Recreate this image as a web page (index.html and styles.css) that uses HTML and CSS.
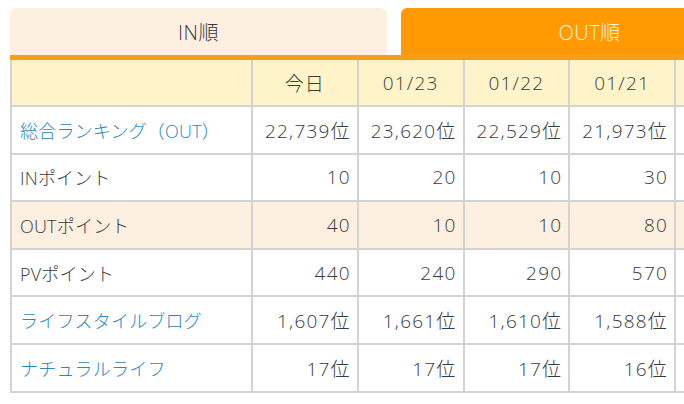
FILE: index.html
```html
<!DOCTYPE html>
<html lang="ja">
<head>
<meta charset="utf-8">
<link rel="stylesheet" href="styles.css">
</head>
<body>
<div class="wrap">
  <div class="tabs">
    <div class="tab tab-in">IN順</div>
    <div class="tab tab-out">OUT順</div>
  </div>
  <div class="bar"></div>
  <div class="grid">
    <div class="row head">
      <div class="c"></div>
      <div class="c ctr">今日</div>
      <div class="c ctr">01/23</div>
      <div class="c ctr">01/22</div>
      <div class="c ctr">01/21</div>
      <div class="c ctr"></div>
    </div>
    <div class="row">
      <div class="c lbl link">総合ランキング（OUT）</div>
      <div class="c num">22,739位</div>
      <div class="c num">23,620位</div>
      <div class="c num">22,529位</div>
      <div class="c num">21,973位</div>
      <div class="c num"></div>
    </div>
    <div class="row">
      <div class="c lbl">INポイント</div>
      <div class="c num">10</div>
      <div class="c num">20</div>
      <div class="c num">10</div>
      <div class="c num">30</div>
      <div class="c num"></div>
    </div>
    <div class="row peach">
      <div class="c lbl">OUTポイント</div>
      <div class="c num">40</div>
      <div class="c num">10</div>
      <div class="c num">10</div>
      <div class="c num">80</div>
      <div class="c num"></div>
    </div>
    <div class="row">
      <div class="c lbl">PVポイント</div>
      <div class="c num">440</div>
      <div class="c num">240</div>
      <div class="c num">290</div>
      <div class="c num">570</div>
      <div class="c num"></div>
    </div>
    <div class="row">
      <div class="c lbl link">ライフスタイルブログ</div>
      <div class="c num">1,607位</div>
      <div class="c num">1,661位</div>
      <div class="c num">1,610位</div>
      <div class="c num">1,588位</div>
      <div class="c num"></div>
    </div>
    <div class="row">
      <div class="c lbl link">ナチュラルライフ</div>
      <div class="c num">17位</div>
      <div class="c num">17位</div>
      <div class="c num">17位</div>
      <div class="c num">16位</div>
      <div class="c num"></div>
    </div>
  </div>
</div>
</body>
</html>
```
FILE: styles.css
```css
html, body {
  margin: 0;
  padding: 0;
  background: #ffffff;
  overflow: hidden;
}
body {
  font-family: "Open Sans", "Noto Sans CJK JP", sans-serif;
  font-weight: 300;
  font-size: 18px;
  color: #3a3a3a;
}
.wrap {
  margin: 8px 0 0 10px;
  width: 674px;
  overflow: hidden;
}
.tabs {
  display: flex;
  gap: 14px;
}
.tab {
  flex: 0 0 377px;
  height: 47px;
  border-radius: 6px 6px 0 0;
  display: flex;
  align-items: center;
  justify-content: center;
  font-size: 20px;
  letter-spacing: 0.5px;
}
.tab-in {
  background: #fdf0e1;
  color: #3a3a3a;
}
.tab-out {
  background: #ff9a05;
  color: #fff3dc;
}
.bar {
  height: 5px;
  background: #f59e1c;
}
.grid {
  display: grid;
  grid-template-columns: 239px repeat(5, 103.75px);
  grid-template-rows: 45px repeat(6, 45.6px);
  gap: 2px;
  background: #d3d3d3;
  border-left: 2px solid #d3d3d3;
  padding-bottom: 2px;
  width: max-content;
}
.row {
  display: contents;
}
.c {
  background: #ffffff;
  display: flex;
  align-items: center;
  padding: 0 8px;
  white-space: nowrap;
}
.lbl {
  letter-spacing: 0.2px;
}
.head .c {
  background: #fff3c9;
}
.peach .c {
  background: #fdf0e0;
}
.ctr {
  justify-content: center;
  font-size: 19px;
  letter-spacing: 1.2px;
}
.num {
  justify-content: flex-end;
  font-size: 19px;
  letter-spacing: 1.2px;
  padding-right: 6px;
}
.link {
  color: #2e86bb;
}
```
